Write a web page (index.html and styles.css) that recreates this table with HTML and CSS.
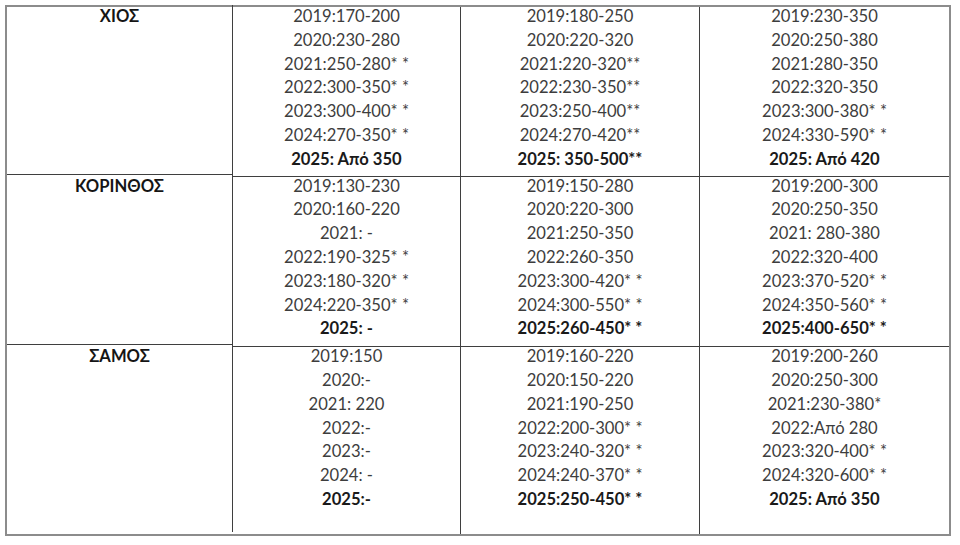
FILE: index.html
```html
<!DOCTYPE html>
<html lang="el">
<head>
<meta charset="utf-8">
<title>Τιμές</title>
<link rel="stylesheet" href="styles.css">
</head>
<body>
<div class="grid">
  <div class="cell name">ΧΙΟΣ</div>
  <div class="cell">
    <div>2019:170-200</div>
    <div>2020:230-280</div>
    <div>2021:250-280<span class="ast">* *</span></div>
    <div>2022:300-350<span class="ast">* *</span></div>
    <div>2023:300-400<span class="ast">* *</span></div>
    <div>2024:270-350<span class="ast">* *</span></div>
    <div class="b">2025: Από 350</div>
  </div>
  <div class="cell">
    <div>2019:180-250</div>
    <div>2020:220-320</div>
    <div>2021:220-320<span class="ast">**</span></div>
    <div>2022:230-350<span class="ast">**</span></div>
    <div>2023:250-400<span class="ast">**</span></div>
    <div>2024:270-420<span class="ast">**</span></div>
    <div class="b">2025: 350-500<span class="ast">**</span></div>
  </div>
  <div class="cell last">
    <div>2019:230-350</div>
    <div>2020:250-380</div>
    <div>2021:280-350</div>
    <div>2022:320-350</div>
    <div>2023:300-380<span class="ast">* *</span></div>
    <div>2024:330-590<span class="ast">* *</span></div>
    <div class="b">2025: Από 420</div>
  </div>

  <div class="cell name mid">ΚΟΡΙΝΘΟΣ</div>
  <div class="cell mid">
    <div>2019:130-230</div>
    <div>2020:160-220</div>
    <div>2021: -</div>
    <div>2022:190-325<span class="ast">* *</span></div>
    <div>2023:180-320<span class="ast">* *</span></div>
    <div>2024:220-350<span class="ast">* *</span></div>
    <div class="b">2025: -</div>
  </div>
  <div class="cell mid">
    <div>2019:150-280</div>
    <div>2020:220-300</div>
    <div>2021:250-350</div>
    <div>2022:260-350</div>
    <div>2023:300-420<span class="ast">* *</span></div>
    <div>2024:300-550<span class="ast">* *</span></div>
    <div class="b">2025:260-450<span class="ast">* *</span></div>
  </div>
  <div class="cell last mid">
    <div>2019:200-300</div>
    <div>2020:250-350</div>
    <div>2021: 280-380</div>
    <div>2022:320-400</div>
    <div>2023:370-520<span class="ast">* *</span></div>
    <div>2024:350-560<span class="ast">* *</span></div>
    <div class="b">2025:400-650<span class="ast">* *</span></div>
  </div>

  <div class="cell name bottom">ΣΑΜΟΣ</div>
  <div class="cell bottom">
    <div>2019:150</div>
    <div>2020:-</div>
    <div>2021: 220</div>
    <div>2022:-</div>
    <div>2023:-</div>
    <div>2024: -</div>
    <div class="b">2025:-</div>
  </div>
  <div class="cell bottom">
    <div>2019:160-220</div>
    <div>2020:150-220</div>
    <div>2021:190-250</div>
    <div>2022:200-300<span class="ast">* *</span></div>
    <div>2023:240-320<span class="ast">* *</span></div>
    <div>2024:240-370<span class="ast">* *</span></div>
    <div class="b">2025:250-450<span class="ast">* *</span></div>
  </div>
  <div class="cell last bottom">
    <div>2019:200-260</div>
    <div>2020:250-300</div>
    <div>2021:230-380<span class="ast">*</span></div>
    <div>2022:Από 280</div>
    <div>2023:320-400<span class="ast">* *</span></div>
    <div>2024:320-600<span class="ast">* *</span></div>
    <div class="b">2025: Από 350</div>
  </div>
</div>
</body>
</html>
```
FILE: styles.css
```css
html, body {
  margin: 0;
  padding: 0;
  background: #ffffff;
}
body {
  font-family: Lato, "Open Sans", "DejaVu Sans", sans-serif;
  font-size: 16.6px;
  line-height: 23.8px;
  color: #3d3d3d;
  padding: 5px 0 0 5px;
}
.grid {
  display: grid;
  grid-template-columns: 226px 228px 239px 249px;
  width: 942px;
  border: 2px solid #8c8c8c;
}
.cell {
  box-sizing: border-box;
  border-right: 1px solid #3f3f3f;
  border-bottom: 1px solid #3f3f3f;
  text-align: center;
  padding: 0 0 2px 0;
}
.cell.mid {
  padding-bottom: 3px;
}
.cell > div {
  white-space: nowrap;
  position: relative;
  top: -2px;
}
.cell.last {
  border-right: none;
}
.cell.bottom {
  border-bottom: none;
  padding-bottom: 20px;
}
.name {
  font-weight: 700;
  color: #151515;
  position: relative;
  top: -2px;
}
.b {
  font-weight: 700;
  color: #1a1a1a;
}
.ast {
  font-size: 16.6px;
}
```
